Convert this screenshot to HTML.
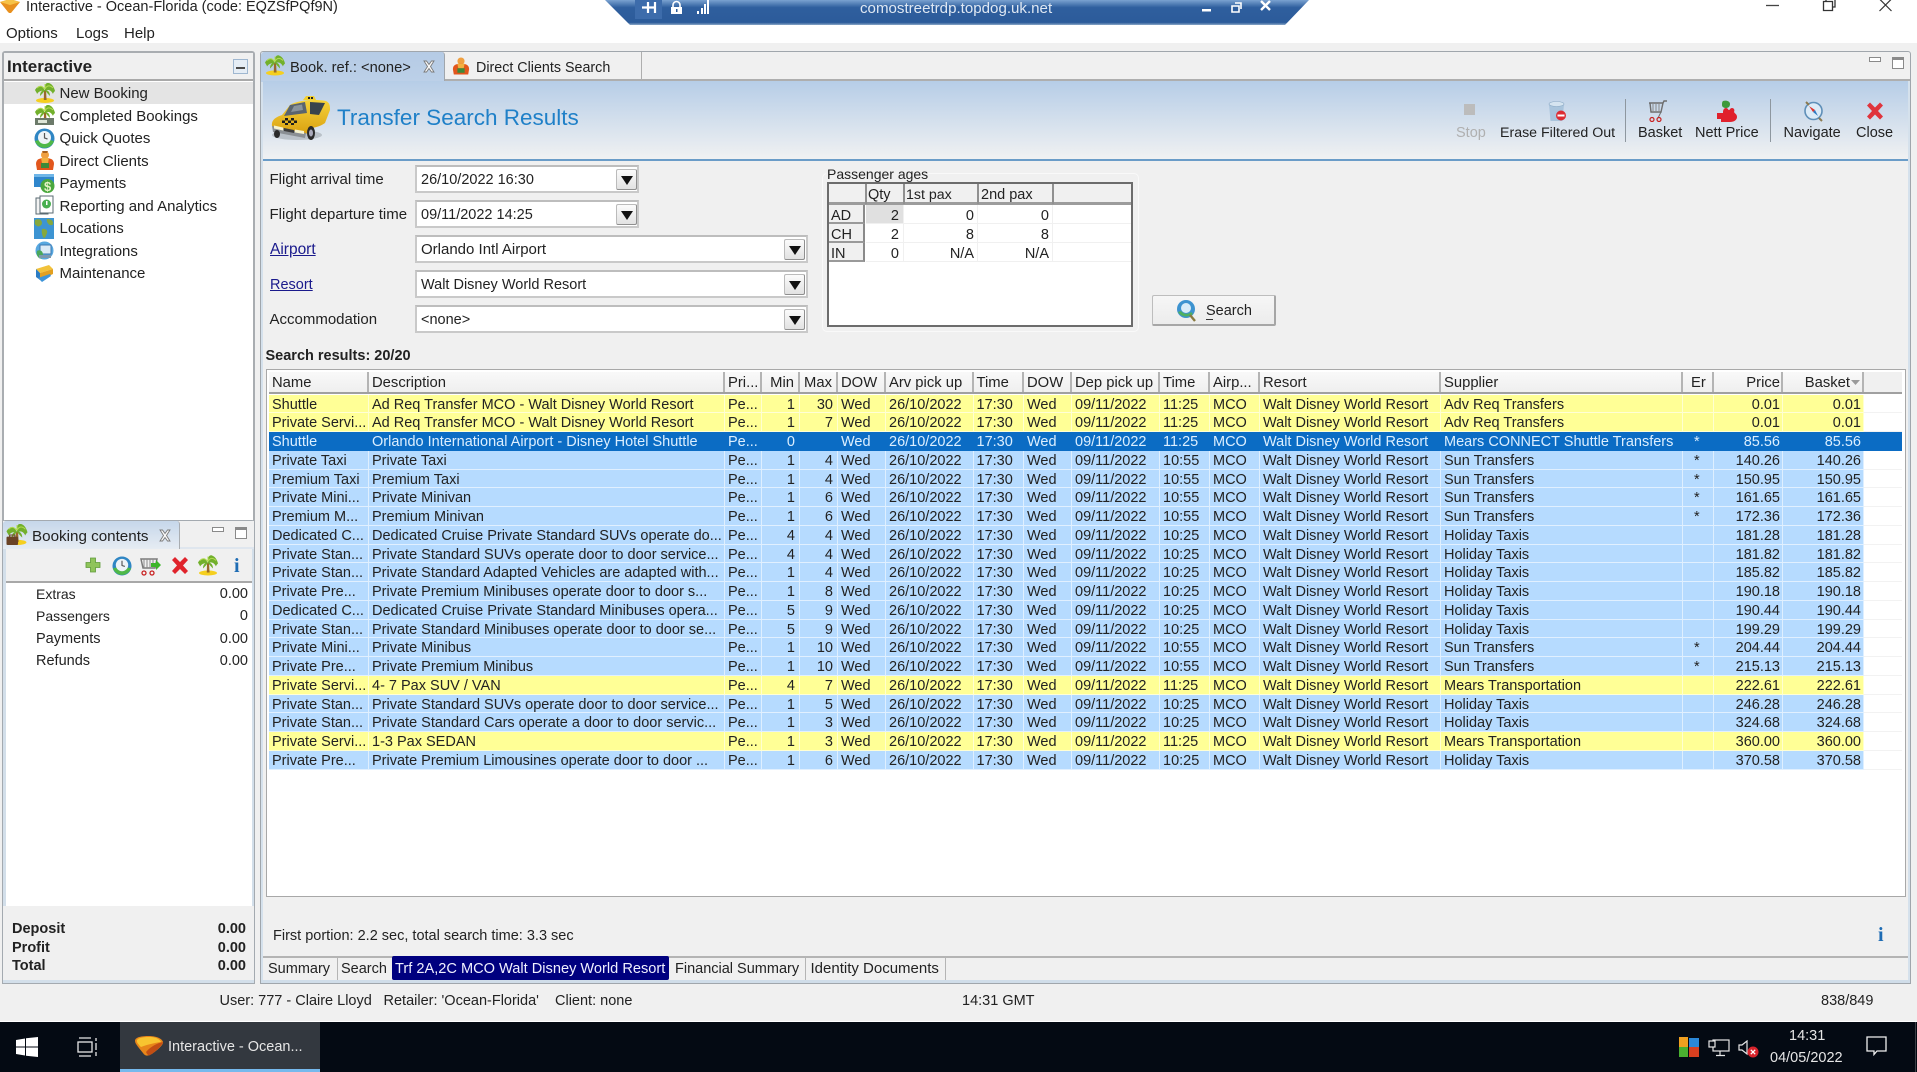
<!DOCTYPE html>
<html><head><meta charset="utf-8"><title>Interactive</title>
<style>
html,body{margin:0;padding:0;width:1917px;height:1072px;overflow:hidden;background:#fff}
#root{position:absolute;left:0;top:0;width:1917px;height:1072px;overflow:hidden;font:14.5px/18px "Liberation Sans",sans-serif;color:#222;filter:blur(.35px)}
.b,.t,svg{position:absolute}
.t{white-space:nowrap;margin-top:1px}
.h{font-weight:bold}
.f{font-size:15px}
.l{color:#1a1a8c;text-decoration:underline}
.rw{position:absolute;left:269px;width:1633px;height:18.75px;display:grid;grid-template-columns:100px 356px 37px 38px 38px 48px 87.5px 50.5px 48px 88px 50px 50px 181px 242px 31px 69px 81px 38px}
.rw i{font-style:normal;display:block;white-space:nowrap;overflow:hidden;padding:0 3px;line-height:20px;height:18.75px;box-sizing:border-box;border-right:1px solid rgba(255,255,255,.55);border-bottom:1px solid rgba(255,255,255,.6)}
.rw i:nth-child(n+4):nth-child(-n+5){text-align:right;padding-right:4px}
.rw i:nth-child(n+16):nth-child(-n+17){text-align:right;padding-right:2px}
.rw i:nth-child(4){padding-right:13px}
.rw i:nth-child(15){padding-left:11px}
.rw i:nth-child(18){border-right:0;border-bottom:1px solid #f2f2f2;background:#fff!important}
.y i{background:#ffff96}.a i{background:#b6dbff}
.s i{background:#0b6cc4;color:#dcefff;border-color:rgba(11,108,196,1)}
.s i:nth-child(18){background:#0b6cc4!important;border-color:#0b6cc4}
.hd{position:absolute;left:269px;top:372px;width:1633px;height:22px;display:grid;grid-template-columns:100px 356px 37px 38px 38px 48px 87.5px 50.5px 48px 88px 50px 50px 181px 242px 31px 69px 81px 38px;background:#f0f0f0;border-bottom:2px solid #a0a0a0;box-sizing:border-box;font-size:14.8px}
.hd i{font-style:normal;white-space:nowrap;overflow:hidden;padding:0 3px;line-height:22px;box-sizing:border-box;border-right:2px solid #b4b4b4;background:linear-gradient(#f9f9f9,#efefef)}
.hd i:nth-child(n+4):nth-child(-n+5){text-align:right;padding-right:4px}
.hd i:nth-child(16){text-align:right;padding-right:1px}
.hd i:nth-child(17){text-align:right}
.hd i:nth-child(15){padding-left:8px}
.hd i:nth-child(18){border-right:0;background:#f0f0f0}
.dd{position:absolute;width:21px;height:21px;box-sizing:border-box;background:linear-gradient(#fbfbfb,#e2e2e2);border:1px solid #bbb;border-bottom-color:#8f8f8f;border-right-color:#8f8f8f;border-radius:2px}
.dd:after{content:"";position:absolute;left:4px;top:6px;border-left:6px solid transparent;border-right:6px solid transparent;border-top:9px solid #111}
.in{position:absolute;box-sizing:border-box;background:#fff;border:2px solid #c9c9c9;border-top-color:#bdbdbd}
.rh{position:absolute;left:829px;width:36px;height:19px;background:#f0f0f0;border-right:2px solid #8a8a8a;border-bottom:2px solid #9a9a9a;box-sizing:border-box}
.ln{position:absolute;background:#a8a8a8}
</style></head><body><div id="root">

<svg width="0" height="0" style="position:absolute"><defs>
<symbol id="palm" viewBox="0 0 20 20">
<ellipse cx="10" cy="17.500" rx="9" ry="2.500" fill="#f5cf1f"/>
<path d="M9 7 L11 7 L11.600 17 L8.800 17 Z" fill="#9a6a2a"/>
<path d="M10 8 C7 1 3 2 0 7 C1 9 2 10 2 11 C4 8 7 7 10 8Z M10 8 C9 1 12 -1 14 0 C17 1 19 4 20 8 C19 9 18 10 18 11 C16 7 13 6 10 8Z M10 7 C7 7 5 9 5 13 C7 11 9 9 10 7Z M10 7 C13 7 15 9 15 13 C13 11 11 9 10 7Z" fill="#72b02c"/>
<path d="M10 6 C7 3 5 2 2 5 M10 6 C12 2 15 2 18 5 M10 6V1" stroke="#b4dc52" stroke-width="1" fill="none"/>
</symbol>
</defs></svg>

<!-- top bar -->
<div class="b" style="left:0;top:43px;width:1917px;height:978px;background:#f0f0f0"></div>
<svg style="left:0;top:0" width="21" height="13" viewBox="0 0 21 13"><path d="M0 2 L10 -1 L20 2 L11 13 Q10 14 8 12 Z" fill="#e8901e"/><path d="M0 2 L10 -1 L20 2 L10 5Z" fill="#f6c247"/></svg>
<div class="t" style="left:26px;top:-3px">Interactive - Ocean-Florida (code: EQZSfPQf9N)</div>
<div class="t f" style="left:6px;top:24px">Options</div><div class="t f" style="left:76px;top:24px">Logs</div><div class="t f" style="left:124px;top:24px">Help</div>

<svg style="left:604px;top:0" width="706" height="26" viewBox="0 0 706 26"><defs><linearGradient id="rg" x1="0" y1="0" x2="0" y2="1"><stop offset="0" stop-color="#7aa2d0"/><stop offset=".3" stop-color="#2f5f9e"/><stop offset=".9" stop-color="#2c5b9a"/><stop offset="1" stop-color="#8aa8c8"/></linearGradient></defs><polygon points="1,0 26,25 681,25 705,0" fill="url(#rg)"/><rect x="31" y="0" width="27" height="19" fill="#3d6cab"/>
<path d="M38 7.500h13M44 2v11M51 2v11" stroke="#fff" stroke-width="2.200" fill="none"/>
<path d="M69 8V5a3.500 3.500 0 0 1 7 0v3" stroke="#fff" stroke-width="1.600" fill="none"/><rect x="67" y="7" width="11" height="7" fill="#fff"/><rect x="72" y="9" width="1.500" height="3" fill="#2c5b9a"/>
<path d="M93 14h2v-3h-2zM97 14h2V8h-2zM100 14h2V4h-2zM103 14h2V0h-2z" fill="#fff"/>
<rect x="598" y="9" width="9" height="2.500" fill="#fff"/><path d="M628 6h7v6h-7zM631 3h6v6" stroke="#fff" stroke-width="1.600" fill="none"/><path d="M657 1l9 9M666 1l-9 9" stroke="#fff" stroke-width="2.400"/></svg>
<div class="t" style="left:860px;top:-1px;color:#dfe8f3;font-size:15.100px">comostreetrdp.topdog.uk.net</div>

<svg style="left:1760px;top:0" width="140" height="14" viewBox="0 0 140 14"><path d="M6 5.500h13" stroke="#444" stroke-width="1.300"/><path d="M63.500 1.500h9v9h-9z" stroke="#333" stroke-width="1.300" fill="none"/><path d="M66 1V-1h9v8h-2" stroke="#333" stroke-width="1.300" fill="none"/><path d="M119.500 -1l12 12M131.500 -1l-12 12" stroke="#333" stroke-width="1.200"/></svg>

<!-- left top panel -->
<div class="b" style="left:2px;top:51px;width:253px;height:499px;box-sizing:border-box;background:#fff;border:2px solid #a9adb1;border-radius:3px 3px 0 0"></div>
<div class="b" style="left:4px;top:53px;width:249px;height:26px;background:#f0f0f0;border-bottom:2px solid #a9a9a9"></div>
<div class="t h" style="left:7px;top:57px;font-size:17px">Interactive</div>
<div class="b" style="left:233px;top:59px;width:15px;height:15px;box-sizing:border-box;background:#e5edf5;border:1px solid #9fb7d0"></div><div class="b" style="left:236px;top:67px;width:9px;height:2px;background:#4a4a4a"></div>
<div class="b" style="left:4px;top:82px;width:249px;height:22px;background:#e4e4e4"></div>

<svg style="left:35px;top:83px" width="20" height="20"><use href="#palm"/></svg>
<svg style="left:35px;top:105px" width="20" height="20"><use href="#palm"/><rect x="0" y="13" width="19" height="7" fill="#6c7a6a"/><rect x="3" y="15" width="9" height="3" fill="#dfe6d8"/></svg>
<svg style="left:34px;top:128px" width="21" height="21" viewBox="0 0 21 21"><circle cx="10.500" cy="10.500" r="10" fill="#2f86c4"/><path d="M1 13a10 10 0 0 0 19 0l-4-1a6 6 0 0 1-11 0z" fill="#4fb848"/><circle cx="10.500" cy="9.500" r="6.500" fill="#eef3f7"/><path d="M10.500 5v5l3 1" stroke="#555" stroke-width="1.200" fill="none"/></svg>
<svg style="left:35px;top:150px" width="20" height="21" viewBox="0 0 20 21"><circle cx="10" cy="5" r="4" fill="#f0a040"/><path d="M7 1h6l-1 2H8z" fill="#a8601c"/><path d="M1 14c0-5 4-6 9-6s9 1 9 6l-1 6H2z" fill="#e2561c"/><path d="M6 8h8l-1 5H7z" fill="#f2b040"/><rect x="6" y="13" width="8" height="5" fill="#3d8a3a"/></svg>
<svg style="left:34px;top:173px" width="21" height="21" viewBox="0 0 21 21"><rect x="0" y="1" width="20" height="13" fill="#2f86cc"/><rect x="0" y="1" width="20" height="3" fill="#6fb6e8"/><circle cx="13.500" cy="13" r="7" fill="#4aa83e"/><text x="10" y="18" font-family="Liberation Sans,sans-serif" font-weight="bold" font-size="13" fill="#e6f2c8">$</text></svg>
<svg style="left:35px;top:195px" width="19" height="21" viewBox="0 0 19 21"><rect x="1" y="3" width="12" height="16" fill="#f3f3f3" stroke="#5a6a72"/><rect x="5" y="1" width="13" height="17" fill="#fff" stroke="#5a6a72"/><circle cx="11.500" cy="9" r="4.500" fill="#48b050"/><rect x="11" y="6" width="1.500" height="4" fill="#fff"/></svg>
<svg style="left:34px;top:218px" width="20" height="21" viewBox="0 0 20 21"><rect width="20" height="21" fill="#3d94d2"/><path d="M1 2c4-2 7 0 7 3s-4 4-5 3-3-1-2-6zM13 1c3 0 6 1 6 4s-2 2-3 2-4-3-3-6zM8 11c3-1 6 1 5 4s-2 5-3 5-3-6-2-9z" fill="#86a83c"/></svg>
<svg style="left:35px;top:240px" width="19" height="21" viewBox="0 0 19 21"><circle cx="9.500" cy="10.500" r="9" fill="#58a8e0"/><rect x="5" y="5" width="11" height="9" fill="#dbeaf6" stroke="#3d78b0"/><path d="M2 11c3-2 6 0 6 4s-3 4-4 3-3-3-2-7z" fill="#4aa85a"/><rect x="4" y="15" width="12" height="3" fill="#7d98ae"/></svg>
<svg style="left:35px;top:263px" width="19" height="20" viewBox="0 0 19 20"><path d="M1 6l13-4 4 4-13 4z" fill="#f2c23a"/><path d="M1 6l4 4v7l-4-3z" fill="#2b7cc4"/><path d="M5 10l13-4v5L5 17z" fill="#e2a020"/><path d="M3 15l4 4 9-6-1-2z" fill="#3d94d8"/></svg>

<div class="t f" style="left:59.500px;top:84px">New Booking</div>
<div class="t f" style="left:59.500px;top:106.500px">Completed Bookings</div>
<div class="t f" style="left:59.500px;top:129px">Quick Quotes</div>
<div class="t f" style="left:59.500px;top:151.500px">Direct Clients</div>
<div class="t f" style="left:59.500px;top:174px">Payments</div>
<div class="t f" style="left:59.500px;top:196.500px">Reporting and Analytics</div>
<div class="t f" style="left:59.500px;top:219px">Locations</div>
<div class="t f" style="left:59.500px;top:241.500px">Integrations</div>
<div class="t f" style="left:59.500px;top:264px">Maintenance</div>

<!-- left bottom panel -->
<div class="b" style="left:2px;top:520px;width:253px;height:464px;box-sizing:border-box;background:#d3dfea;border:1px solid #a4aab0;border-radius:3px 3px 0 0"></div>
<div class="b" style="left:3px;top:521px;width:251px;height:27px;background:#f0f0f0"></div>
<div class="b" style="left:3px;top:521px;width:177px;height:28px;box-sizing:border-box;background:linear-gradient(#c6d7ea,#e6ecf3);border-right:1px solid #a9adb1;border-radius:3px 3px 0 0"></div>
<div class="b" style="left:180px;top:547px;width:74px;height:2px;background:#dfe6ee"></div>
<svg style="left:6px;top:524px" width="22" height="21" viewBox="0 0 20 20"><use href="#palm"/><rect x="0" y="12" width="11" height="8" rx="1" fill="#6a4326"/><rect x="3" y="10.500" width="5" height="2" fill="none" stroke="#6a4326"/></svg>
<div class="t" style="left:32px;top:527px;font-size:15.200px">Booking contents</div>
<svg style="left:159px;top:529px" width="12" height="13" viewBox="0 0 12 13"><path d="M1 1h2.500L6 4.500 8.500 1H11L7.500 6.500 11 12H8.500L6 8.500 3.500 12H1L4.500 6.500z" fill="#f8f8f8" stroke="#7a7a7a" stroke-width=".9"/></svg>
<div class="b" style="left:212px;top:527px;width:12px;height:5px;box-sizing:border-box;background:#fff;border:1px solid #8a8a8a"></div>
<div class="b" style="left:235px;top:527px;width:12px;height:12px;box-sizing:border-box;background:#fff;border:1px solid #8a8a8a;border-top-width:3px"></div>
<div class="b" style="left:6px;top:549px;width:246px;height:32px;background:#f0f0f0;border-bottom:2px solid #a8a8a8"></div>
<svg style="left:85px;top:557px" width="16" height="16" viewBox="0 0 16 16"><path d="M5.500 1h5v4.500H15v5h-4.500V15h-5v-4.500H1v-5h4.500z" fill="#8fc45a" stroke="#5d9a38" stroke-width=".8"/></svg>
<svg style="left:112px;top:556px" width="20" height="20" viewBox="0 0 21 21"><circle cx="10.500" cy="10.500" r="10" fill="#2f86c4"/><path d="M1 13a10 10 0 0 0 19 0l-4-1a6 6 0 0 1-11 0z" fill="#4fb848"/><circle cx="10.500" cy="9.500" r="6.500" fill="#eef3f7"/><path d="M10.500 5v5l3 1" stroke="#555" stroke-width="1.200" fill="none"/></svg>
<svg style="left:140px;top:555px" width="21" height="21" viewBox="0 0 21 21"><path d="M1 4h16l-2 9H3z" fill="none" stroke="#7a7a7a" stroke-width="1.500"/><path d="M4 4v9M7 4v9M10 4v9M13 4v9" stroke="#8a8a8a"/><circle cx="4" cy="18" r="2" fill="none" stroke="#c82020" stroke-width="1.300"/><circle cx="12" cy="18" r="2" fill="none" stroke="#c82020" stroke-width="1.300"/><path d="M11 8h5V5l5 5-5 5v-3h-5z" fill="#3cb528"/></svg>
<svg style="left:171px;top:557px" width="18" height="17" viewBox="0 0 18 17"><path d="M1 3l3-3 5 5 5-5 3 3-5 5.500 5 5.500-3 3-5-5-5 5-3-3 5-5.500z" fill="#e0242c"/></svg>
<svg style="left:198px;top:555px" width="20" height="21"><use href="#palm"/></svg>
<div class="t" style="left:234px;top:554px;font:bold 20px/22px 'Liberation Serif',serif;color:#1e6cb4">i</div>
<div class="b" style="left:6px;top:583px;width:246px;height:323px;background:#fff"></div>
<div class="b" style="left:3px;top:906px;width:251px;height:74px;background:#f0f0f0"></div>
<div class="t" style="left:36px;top:583.500px;font-size:14px">Extras</div><div class="t" style="right:1669px;top:584px">0.00</div>
<div class="t" style="left:36px;top:605.500px;font-size:14px">Passengers</div><div class="t" style="right:1669px;top:606px">0</div>
<div class="t" style="left:36px;top:628.500px">Payments</div><div class="t" style="right:1669px;top:628.500px">0.00</div>
<div class="t" style="left:36px;top:650.500px">Refunds</div><div class="t" style="right:1669px;top:650.500px">0.00</div>
<div class="t h" style="left:12px;top:919px">Deposit</div><div class="t h" style="right:1671px;top:919px">0.00</div>
<div class="t h" style="left:12px;top:938px">Profit</div><div class="t h" style="right:1671px;top:938px">0.00</div>
<div class="t h" style="left:12px;top:956px">Total</div><div class="t h" style="right:1671px;top:956px">0.00</div>

<!-- right panel -->
<div class="b" style="left:260px;top:51px;width:1651px;height:933px;box-sizing:border-box;background:#f0f0f0;border:1px solid #a0a6ac;border-radius:3px 3px 0 0"></div>
<div class="b" style="left:261px;top:80px;width:2px;height:903px;background:#d5e1ec"></div>
<div class="b" style="left:1908px;top:80px;width:2px;height:903px;background:#d5e1ec"></div>
<div class="b" style="left:261px;top:980px;width:1649px;height:3px;background:#d0dde9"></div>
<div class="b" style="left:445px;top:79px;width:1465px;height:2px;background:#aeaeae"></div>
<div class="b" style="left:261px;top:52px;width:184px;height:30px;background:linear-gradient(#b5cbe5,#bcd0e8);border-right:1px solid #a0a6ac;box-sizing:border-box;border-radius:3px 3px 0 0"></div>
<div class="b" style="left:641px;top:52px;width:1px;height:28px;background:#aeaeae"></div>
<svg style="left:265px;top:55px" width="20" height="21"><use href="#palm"/></svg>
<div class="t" style="left:290px;top:58px;font-size:14.700px">Book. ref.: &lt;none&gt;</div>
<svg style="left:423px;top:60px" width="12" height="13" viewBox="0 0 12 13"><path d="M1 1h2.500L6 4.500 8.500 1H11L7.500 6.500 11 12H8.500L6 8.500 3.500 12H1L4.500 6.500z" fill="#f8f8f8" stroke="#7a7a7a" stroke-width=".9"/></svg>
<svg style="left:452px;top:56px" width="18" height="20" viewBox="0 0 20 21"><circle cx="10" cy="5" r="4" fill="#f0a040"/><path d="M1 14c0-5 4-6 9-6s9 1 9 6l-1 6H2z" fill="#e2561c"/><path d="M6 8h8l-1 5H7z" fill="#f2b040"/><rect x="6" y="13" width="8" height="5" fill="#3d8a3a"/></svg>
<div class="t" style="left:476px;top:58px;font-size:14.300px">Direct Clients Search</div>
<div class="b" style="left:1869px;top:57px;width:12px;height:5px;box-sizing:border-box;background:#fff;border:1px solid #8a8a8a"></div>
<div class="b" style="left:1892px;top:57px;width:12px;height:12px;box-sizing:border-box;background:#fff;border:1px solid #8a8a8a;border-top-width:3px"></div>

<!-- banner -->
<div class="b" style="left:263px;top:81px;width:1645px;height:78px;background:linear-gradient(#b6cde7,#f0f1f2)"></div>
<div class="b" style="left:263px;top:159px;width:1645px;height:2px;background:#6a9cc8"></div>
<svg style="left:270px;top:96px" width="62" height="48" viewBox="0 0 62 48">
<defs><linearGradient id="cy" x1="0" y1="0" x2="0" y2="1"><stop offset="0" stop-color="#f6d23a"/><stop offset="1" stop-color="#d9a010"/></linearGradient></defs>
<ellipse cx="27" cy="39" rx="25" ry="5" fill="#9aa3aa" opacity=".55"/>
<path d="M2 30 C1 24 6 21 12 19 L20 9 C28 4 45 3 56 5 C60 7 60 10 60 14 L55 27 C51 30 47 31 42 32 L36 38 C24 40 9 38 2 30Z" fill="url(#cy)"/>
<path d="M20 9 L35 6 L37 17 L14 20Z" fill="#5a646e"/><path d="M40 6 L55 7 L49 19 L40 18Z" fill="#39434c"/><path d="M24 10L32 8.500 33 14 21 16Z" fill="#8a949c"/>
<path d="M33 4 L46 4 L44 0 L36 0Z" fill="#f2cf30"/><path d="M38 1h2v2h-2zM41 1h2v2h-2z" fill="#222"/>
<path d="M15 22h3v2.500h-3zM21 22h3v2.500h-3zM18 24.500h3V27h-3zM24 24.500h3V27h-3zM12 24.500h3V27h-3zM15 27h3v2h-3zM21 27h3v2h-3z" fill="#1c1c1c"/>
<path d="M2 30 L36 37 L35 42 L3 36Z" fill="#8a8f94"/><path d="M4 29.500l9 2v3l-9-2zM25 33.500l9 1.500v3l-9-1.500z" fill="#f6f3d0"/>
<path d="M14 32l10 2v3l-10-2z" fill="#3c3c3c"/>
<ellipse cx="7" cy="38" rx="3" ry="4" fill="#2a2a2a"/><ellipse cx="41" cy="37" rx="4" ry="7" fill="#2a2a2a"/><ellipse cx="41" cy="37" rx="2" ry="3.500" fill="#aab"/></svg>
<div class="t" style="left:337px;top:104px;font-size:22.500px;line-height:26px;color:#1f80c8">Transfer Search Results</div>

<!-- toolbar -->
<div class="b" style="left:1464px;top:104px;width:11px;height:11px;background:#bcbcbc"></div>
<svg style="left:1547px;top:101px" width="21" height="21" viewBox="0 0 21 21"><path d="M2 3h15l-1.500 17h-12z" fill="#a9c4dc"/><ellipse cx="9.500" cy="3" rx="7.500" ry="2.500" fill="#d5e4f0" stroke="#8aa8c4" stroke-width=".6"/><circle cx="14" cy="14.500" r="5" fill="#dd2c33"/><rect x="10.500" y="13.500" width="7" height="2" fill="#fff"/></svg>
<svg style="left:1648px;top:100px" width="20" height="22" viewBox="0 0 20 22"><path d="M1 3h14l1-2h3M2 3l1 9h10l2-9" fill="none" stroke="#6d6d6d" stroke-width="1.400"/><path d="M5 3v9M8 3v9M11 3v9" stroke="#8a8a8a"/><path d="M13 12l-3 6" stroke="#6d6d6d"/><circle cx="4" cy="19.500" r="2" fill="none" stroke="#c82020" stroke-width="1.200"/><circle cx="11" cy="19.500" r="2" fill="none" stroke="#c82020" stroke-width="1.200"/></svg>
<svg style="left:1717px;top:100px" width="20" height="22" viewBox="0 0 20 22"><path d="M6 1c3-1 7 0 7 3s-2 4-4 4-4-1-4-3 0-3 1-4z" fill="#3d9a3c"/><path d="M0 13h6v-1c0-2 1-4 3-4s2 2 3 2 1-2 3-2 3 2 2 4c1 2 3 2 3 5s-3 5-7 5H4v-3H0z" fill="#e0202c"/></svg>
<svg style="left:1803px;top:100px" width="21" height="22" viewBox="0 0 21 22"><circle cx="10.500" cy="11" r="8.500" fill="#dcebf7" stroke="#5f8fb8" stroke-width="1.600"/><path d="M6 6l6 4-2 2z" fill="#e0342c"/><path d="M15 16l-5-4 2-2z" fill="#2f7ac0"/><path d="M3 2l3 3M16 18l3 3" stroke="#8c7a50" stroke-width="2"/></svg>
<svg style="left:1866px;top:102px" width="18" height="18" viewBox="0 0 18 17"><path d="M1 3l3-3 5 5 5-5 3 3-5 5.500 5 5.500-3 3-5-5-5 5-3-3 5-5.500z" fill="#e0343c"/></svg>
<div class="t" style="left:1456px;top:123px;color:#b0b0b0">Stop</div>
<div class="t" style="left:1500px;top:123px;font-size:14.200px">Erase Filtered Out</div>
<div class="b" style="left:1625px;top:99px;width:1px;height:43px;background:#8e979f"></div>
<div class="t" style="left:1638px;top:123px">Basket</div>
<div class="t" style="left:1695px;top:123px">Nett Price</div>
<div class="b" style="left:1770px;top:99px;width:1px;height:43px;background:#8e979f"></div>
<div class="t" style="left:1783.500px;top:123px">Navigate</div>
<div class="t" style="left:1856px;top:123px">Close</div>

<!-- form -->
<div class="t f" style="left:269.500px;top:170px">Flight arrival time</div>
<div class="t f" style="left:269.500px;top:205px">Flight departure time</div>
<div class="t l" style="left:270px;top:240px;font-size:15.500px">Airport</div>
<div class="t l" style="left:270px;top:275px">Resort</div>
<div class="t f" style="left:269.500px;top:310px">Accommodation</div>
<div class="in" style="left:415px;top:165px;width:224px;height:28px"></div>
<div class="in" style="left:415px;top:200px;width:224px;height:28px"></div>
<div class="in" style="left:415px;top:235px;width:393px;height:28px"></div>
<div class="in" style="left:415px;top:270px;width:393px;height:28px"></div>
<div class="in" style="left:415px;top:305px;width:393px;height:28px"></div>
<div class="t" style="left:421px;top:170px">26/10/2022 16:30</div>
<div class="t" style="left:421px;top:205px">09/11/2022 14:25</div>
<div class="t" style="left:421px;top:240px;font-size:15px">Orlando Intl Airport</div>
<div class="t" style="left:421px;top:275px">Walt Disney World Resort</div>
<div class="t" style="left:421px;top:310px">&lt;none&gt;</div>
<div class="dd" style="left:616px;top:168.500px"></div>
<div class="dd" style="left:616px;top:203.500px"></div>
<div class="dd" style="left:784px;top:238.500px"></div>
<div class="dd" style="left:784px;top:273.500px"></div>
<div class="dd" style="left:784px;top:308.500px"></div>

<!-- passenger ages -->
<div class="b" style="left:822px;top:173px;width:317px;height:159px;box-sizing:border-box;border:1px solid #f9f9f9;border-radius:5px"></div>
<div class="b" style="left:826px;top:170px;width:102px;height:10px;background:#f0f0f0"></div>
<div class="t" style="left:827px;top:164px;font-size:14px">Passenger ages</div>
<div class="b" style="left:827px;top:182px;width:306px;height:145px;box-sizing:border-box;background:#fff;border:2px solid #6c6c6c"></div>
<div class="b" style="left:829px;top:184px;width:302px;height:21px;box-sizing:border-box;background:#f0f0f0;border-bottom:3px solid #9c9c9c"></div>
<div class="ln" style="left:865px;top:184px;width:2px;height:20px;background:#909090"></div>
<div class="ln" style="left:903px;top:184px;width:2px;height:20px;background:#909090"></div>
<div class="ln" style="left:977px;top:184px;width:2px;height:20px;background:#909090"></div>
<div class="ln" style="left:1052px;top:184px;width:2px;height:20px;background:#909090"></div>
<div class="rh" style="top:205px"></div><div class="rh" style="top:224px"></div><div class="rh" style="top:243px;height:19px"></div>
<div class="b" style="left:866px;top:205px;width:37px;height:18px;background:#e0e0e0"></div>
<div class="ln" style="left:866px;top:223px;width:265px;height:1px;background:#f0f0f0"></div>
<div class="ln" style="left:866px;top:242px;width:265px;height:1px;background:#f0f0f0"></div>
<div class="ln" style="left:866px;top:261px;width:265px;height:1px;background:#f0f0f0"></div>
<div class="ln" style="left:903px;top:205px;width:1px;height:57px;background:#f0f0f0"></div>
<div class="ln" style="left:977px;top:205px;width:1px;height:57px;background:#f0f0f0"></div>
<div class="ln" style="left:1052px;top:205px;width:1px;height:57px;background:#f0f0f0"></div>
<div class="t" style="left:868px;top:185px">Qty</div><div class="t" style="left:906px;top:185px;font-size:14.200px">1st pax</div><div class="t" style="left:981px;top:185px">2nd pax</div>
<div class="t" style="left:831px;top:206px">AD</div><div class="t" style="left:831px;top:225px">CH</div><div class="t" style="left:831px;top:244px">IN</div>
<div class="t" style="right:1018px;top:206px">2</div><div class="t" style="right:943px;top:206px">0</div><div class="t" style="right:868px;top:206px">0</div>
<div class="t" style="right:1018px;top:225px">2</div><div class="t" style="right:943px;top:225px">8</div><div class="t" style="right:868px;top:225px">8</div>
<div class="t" style="right:1018px;top:244px">0</div><div class="t" style="right:943px;top:244px">N/A</div><div class="t" style="right:868px;top:244px">N/A</div>

<!-- search button -->
<div class="b" style="left:1152px;top:295px;width:124px;height:31px;box-sizing:border-box;background:linear-gradient(#f6f6f6,#ececec);border:1px solid #bdbdbd;border-bottom:2px solid #a6a6a6;border-right:2px solid #a6a6a6;border-radius:2px"></div>
<svg style="left:1176px;top:299px" width="21" height="23" viewBox="0 0 21 23"><circle cx="10" cy="10" r="9" fill="#3d93d0"/><circle cx="10" cy="9" r="5" fill="#d8ecf8"/><path d="M2 13c3 5 10 6 15 2l-2-2c-3 3-8 2-10-1z" fill="#4fb060"/><path d="M14 16l5 6" stroke="#8a7a40" stroke-width="2.400"/></svg>
<div class="t" style="left:1206px;top:301px">Search</div>
<div class="b" style="left:1206px;top:319px;width:7px;height:1px;background:#333"></div>

<!-- results -->
<div class="t h" style="left:265.500px;top:346px">Search results: 20/20</div>
<div class="b" style="left:266px;top:369px;width:1640px;height:528px;box-sizing:border-box;background:#fff;border:1px solid #a8a8a8"></div>
<div class="hd"><i>Name</i><i>Description</i><i>Pri...</i><i>Min</i><i>Max</i><i>DOW</i><i>Arv pick up</i><i>Time</i><i>DOW</i><i>Dep pick up</i><i>Time</i><i>Airp...</i><i>Resort</i><i>Supplier</i><i>Er</i><i>Price</i><i style="padding-right:12px">Basket</i><i></i></div>
<svg style="left:1851px;top:380px" width="9" height="6"><path d="M0 0h9L4.500 5z" fill="#9a9a9a"/></svg>

<div class="rw y" style="top:394.600px"><i>Shuttle</i><i>Ad Req Transfer MCO - Walt Disney World Resort</i><i>Pe...</i><i>1</i><i>30</i><i>Wed</i><i>26/10/2022</i><i>17:30</i><i>Wed</i><i>09/11/2022</i><i>11:25</i><i>MCO</i><i>Walt Disney World Resort</i><i>Adv Req Transfers</i><i></i><i>0.01</i><i>0.01</i><i></i></div>
<div class="rw y" style="top:413.350px"><i>Private Servi...</i><i>Ad Req Transfer MCO - Walt Disney World Resort</i><i>Pe...</i><i>1</i><i>7</i><i>Wed</i><i>26/10/2022</i><i>17:30</i><i>Wed</i><i>09/11/2022</i><i>11:25</i><i>MCO</i><i>Walt Disney World Resort</i><i>Adv Req Transfers</i><i></i><i>0.01</i><i>0.01</i><i></i></div>
<div class="rw s" style="top:432.100px"><i>Shuttle</i><i>Orlando International Airport - Disney Hotel Shuttle</i><i>Pe...</i><i>0</i><i></i><i>Wed</i><i>26/10/2022</i><i>17:30</i><i>Wed</i><i>09/11/2022</i><i>11:25</i><i>MCO</i><i>Walt Disney World Resort</i><i>Mears CONNECT Shuttle Transfers</i><i>*</i><i>85.56</i><i>85.56</i><i></i></div>
<div class="rw a" style="top:450.850px"><i>Private Taxi</i><i>Private Taxi</i><i>Pe...</i><i>1</i><i>4</i><i>Wed</i><i>26/10/2022</i><i>17:30</i><i>Wed</i><i>09/11/2022</i><i>10:55</i><i>MCO</i><i>Walt Disney World Resort</i><i>Sun Transfers</i><i>*</i><i>140.26</i><i>140.26</i><i></i></div>
<div class="rw a" style="top:469.600px"><i>Premium Taxi</i><i>Premium Taxi</i><i>Pe...</i><i>1</i><i>4</i><i>Wed</i><i>26/10/2022</i><i>17:30</i><i>Wed</i><i>09/11/2022</i><i>10:55</i><i>MCO</i><i>Walt Disney World Resort</i><i>Sun Transfers</i><i>*</i><i>150.95</i><i>150.95</i><i></i></div>
<div class="rw a" style="top:488.350px"><i>Private Mini...</i><i>Private Minivan</i><i>Pe...</i><i>1</i><i>6</i><i>Wed</i><i>26/10/2022</i><i>17:30</i><i>Wed</i><i>09/11/2022</i><i>10:55</i><i>MCO</i><i>Walt Disney World Resort</i><i>Sun Transfers</i><i>*</i><i>161.65</i><i>161.65</i><i></i></div>
<div class="rw a" style="top:507.100px"><i>Premium M...</i><i>Premium Minivan</i><i>Pe...</i><i>1</i><i>6</i><i>Wed</i><i>26/10/2022</i><i>17:30</i><i>Wed</i><i>09/11/2022</i><i>10:55</i><i>MCO</i><i>Walt Disney World Resort</i><i>Sun Transfers</i><i>*</i><i>172.36</i><i>172.36</i><i></i></div>
<div class="rw a" style="top:525.850px"><i>Dedicated C...</i><i>Dedicated Cruise Private Standard SUVs operate do...</i><i>Pe...</i><i>4</i><i>4</i><i>Wed</i><i>26/10/2022</i><i>17:30</i><i>Wed</i><i>09/11/2022</i><i>10:25</i><i>MCO</i><i>Walt Disney World Resort</i><i>Holiday Taxis</i><i></i><i>181.28</i><i>181.28</i><i></i></div>
<div class="rw a" style="top:544.600px"><i>Private Stan...</i><i>Private Standard SUVs operate door to door service...</i><i>Pe...</i><i>4</i><i>4</i><i>Wed</i><i>26/10/2022</i><i>17:30</i><i>Wed</i><i>09/11/2022</i><i>10:25</i><i>MCO</i><i>Walt Disney World Resort</i><i>Holiday Taxis</i><i></i><i>181.82</i><i>181.82</i><i></i></div>
<div class="rw a" style="top:563.350px"><i>Private Stan...</i><i>Private Standard Adapted Vehicles are adapted with...</i><i>Pe...</i><i>1</i><i>4</i><i>Wed</i><i>26/10/2022</i><i>17:30</i><i>Wed</i><i>09/11/2022</i><i>10:25</i><i>MCO</i><i>Walt Disney World Resort</i><i>Holiday Taxis</i><i></i><i>185.82</i><i>185.82</i><i></i></div>
<div class="rw a" style="top:582.100px"><i>Private Pre...</i><i>Private Premium Minibuses operate door to door s...</i><i>Pe...</i><i>1</i><i>8</i><i>Wed</i><i>26/10/2022</i><i>17:30</i><i>Wed</i><i>09/11/2022</i><i>10:25</i><i>MCO</i><i>Walt Disney World Resort</i><i>Holiday Taxis</i><i></i><i>190.18</i><i>190.18</i><i></i></div>
<div class="rw a" style="top:600.850px"><i>Dedicated C...</i><i>Dedicated Cruise Private Standard Minibuses opera...</i><i>Pe...</i><i>5</i><i>9</i><i>Wed</i><i>26/10/2022</i><i>17:30</i><i>Wed</i><i>09/11/2022</i><i>10:25</i><i>MCO</i><i>Walt Disney World Resort</i><i>Holiday Taxis</i><i></i><i>190.44</i><i>190.44</i><i></i></div>
<div class="rw a" style="top:619.600px"><i>Private Stan...</i><i>Private Standard Minibuses operate door to door se...</i><i>Pe...</i><i>5</i><i>9</i><i>Wed</i><i>26/10/2022</i><i>17:30</i><i>Wed</i><i>09/11/2022</i><i>10:25</i><i>MCO</i><i>Walt Disney World Resort</i><i>Holiday Taxis</i><i></i><i>199.29</i><i>199.29</i><i></i></div>
<div class="rw a" style="top:638.350px"><i>Private Mini...</i><i>Private Minibus</i><i>Pe...</i><i>1</i><i>10</i><i>Wed</i><i>26/10/2022</i><i>17:30</i><i>Wed</i><i>09/11/2022</i><i>10:55</i><i>MCO</i><i>Walt Disney World Resort</i><i>Sun Transfers</i><i>*</i><i>204.44</i><i>204.44</i><i></i></div>
<div class="rw a" style="top:657.100px"><i>Private Pre...</i><i>Private Premium Minibus</i><i>Pe...</i><i>1</i><i>10</i><i>Wed</i><i>26/10/2022</i><i>17:30</i><i>Wed</i><i>09/11/2022</i><i>10:55</i><i>MCO</i><i>Walt Disney World Resort</i><i>Sun Transfers</i><i>*</i><i>215.13</i><i>215.13</i><i></i></div>
<div class="rw y" style="top:675.850px"><i>Private Servi...</i><i>4- 7 Pax SUV / VAN</i><i>Pe...</i><i>4</i><i>7</i><i>Wed</i><i>26/10/2022</i><i>17:30</i><i>Wed</i><i>09/11/2022</i><i>11:25</i><i>MCO</i><i>Walt Disney World Resort</i><i>Mears Transportation</i><i></i><i>222.61</i><i>222.61</i><i></i></div>
<div class="rw a" style="top:694.600px"><i>Private Stan...</i><i>Private Standard SUVs operate door to door service...</i><i>Pe...</i><i>1</i><i>5</i><i>Wed</i><i>26/10/2022</i><i>17:30</i><i>Wed</i><i>09/11/2022</i><i>10:25</i><i>MCO</i><i>Walt Disney World Resort</i><i>Holiday Taxis</i><i></i><i>246.28</i><i>246.28</i><i></i></div>
<div class="rw a" style="top:713.350px"><i>Private Stan...</i><i>Private Standard Cars operate a door to door servic...</i><i>Pe...</i><i>1</i><i>3</i><i>Wed</i><i>26/10/2022</i><i>17:30</i><i>Wed</i><i>09/11/2022</i><i>10:25</i><i>MCO</i><i>Walt Disney World Resort</i><i>Holiday Taxis</i><i></i><i>324.68</i><i>324.68</i><i></i></div>
<div class="rw y" style="top:732.100px"><i>Private Servi...</i><i>1-3 Pax SEDAN</i><i>Pe...</i><i>1</i><i>3</i><i>Wed</i><i>26/10/2022</i><i>17:30</i><i>Wed</i><i>09/11/2022</i><i>11:25</i><i>MCO</i><i>Walt Disney World Resort</i><i>Mears Transportation</i><i></i><i>360.00</i><i>360.00</i><i></i></div>
<div class="rw a" style="top:750.850px"><i>Private Pre...</i><i>Private Premium Limousines operate door to door ...</i><i>Pe...</i><i>1</i><i>6</i><i>Wed</i><i>26/10/2022</i><i>17:30</i><i>Wed</i><i>09/11/2022</i><i>10:25</i><i>MCO</i><i>Walt Disney World Resort</i><i>Holiday Taxis</i><i></i><i>370.58</i><i>370.58</i><i></i></div>

<div class="t" style="left:273px;top:926px">First portion: 2.2 sec, total search time: 3.3 sec</div>
<div class="t" style="left:1878px;top:923px;font:bold 20px/22px 'Liberation Serif',serif;color:#1e6cb4">i</div>

<!-- bottom tabs -->
<div class="b" style="left:263px;top:956px;width:1645px;height:2px;background:#b4b4b4"></div>
<div class="b" style="left:337px;top:958px;width:1px;height:22px;background:#b4b4b4"></div>
<div class="b" style="left:392px;top:956px;width:277px;height:24px;background:#00007f;border-radius:2px"></div>
<div class="b" style="left:805px;top:958px;width:1px;height:22px;background:#b4b4b4"></div>
<div class="b" style="left:945px;top:958px;width:1px;height:22px;background:#b4b4b4"></div>
<div class="t" style="left:268px;top:959px">Summary</div>
<div class="t" style="left:341px;top:959px">Search</div>
<div class="t" style="left:395px;top:959px;color:#f0f0ff;font-size:14.600px">Trf 2A,2C MCO Walt Disney World Resort</div>
<div class="t" style="left:675px;top:959px">Financial Summary</div>
<div class="t f" style="left:810.500px;top:959px">Identity Documents</div>

<!-- status -->
<div class="t" style="left:219.500px;top:990.500px">User: 777 - Claire Lloyd</div>
<div class="t" style="left:383.500px;top:990.500px">Retailer: 'Ocean-Florida'</div>
<div class="t" style="left:555px;top:990.500px">Client: none</div>
<div class="t" style="left:962px;top:990.500px">14:31 GMT</div>
<div class="t" style="left:1821px;top:990.500px">838/849</div>

<!-- taskbar -->
<div class="b" style="left:0;top:1022px;width:1917px;height:50px;background:#040a13"></div>
<svg style="left:16px;top:1037px" width="22" height="20" viewBox="0 0 22 20"><path d="M0 3l9-1.500V9.500H0zM10 1.300L22 0v9.500H10zM0 10.500h9V18.500L0 17zM10 10.500h12V20L10 18.700z" fill="#fff"/></svg>
<svg style="left:77px;top:1037px" width="21" height="20" viewBox="0 0 21 20" fill="none" stroke="#e8e8e8" stroke-width="1.300"><path d="M2 1h12M2 19h12"/><rect x="1" y="5" width="14" height="10"/><path d="M19 1v3M19 6v7M19 15v4"/></svg>
<div class="b" style="left:120px;top:1022px;width:200px;height:50px;background:#33383f"></div>
<div class="b" style="left:120px;top:1069px;width:200px;height:3px;background:#76b9ed"></div>
<svg style="left:134px;top:1035px" width="30" height="22" viewBox="0 0 30 22"><path d="M1 6C1 2 8 1 15 1c6 0 13 2 14 6 1 3-9 11-13 13-3 1-5 1-7-2C6 14 1 9 1 6Z" fill="#e8861a"/><path d="M3 5C5 2 12 2 17 2c4 0 9 2 10 5-7 1-15 3-20 5C5 10 2 7 3 5Z" fill="#f8c430"/><path d="M16 20C20 18 29 10 29 7c-5 1-12 4-17 10 1 2 2 4 4 3Z" fill="#c24e14"/></svg>
<div class="t" style="left:168px;top:1036.500px;color:#e6e6e6">Interactive - Ocean...</div>

<svg style="left:1679px;top:1037px" width="20" height="20" viewBox="0 0 20 20"><rect x="0" y="0" width="9" height="10" fill="#f0a020"/><rect x="10" y="1" width="10" height="9" fill="#2b88d8"/><rect x="0" y="10" width="9" height="10" fill="#4ab030"/><rect x="10" y="10" width="10" height="10" fill="#d84020"/></svg>
<svg style="left:1708px;top:1039px" width="22" height="18" viewBox="0 0 22 18" fill="none" stroke="#e6e6e6" stroke-width="1.200"><rect x="5" y="1" width="16" height="11"/><rect x="1" y="2" width="6" height="6" fill="#040a13"/><path d="M12 12v4M8 16.500h9"/></svg>
<svg style="left:1738px;top:1040px" width="21" height="18" viewBox="0 0 21 18"><path d="M1 5h3l5-4v13L4 10H1z" fill="none" stroke="#e6e6e6" stroke-width="1.200"/><circle cx="15" cy="12" r="5.500" fill="#d8242c"/><path d="M12.800 9.800l4.400 4.400M17.200 9.800l-4.400 4.400" stroke="#fff" stroke-width="1.300"/></svg>
<div class="t" style="left:1789px;top:1026px;color:#e6e6e6">14:31</div>
<div class="t" style="left:1770px;top:1048px;color:#e6e6e6">04/05/2022</div>
<svg style="left:1866px;top:1036px" width="22" height="20" viewBox="0 0 22 20"><path d="M1 1h19v14H11l-3 3.500V15H1z" fill="none" stroke="#f0f0f0" stroke-width="1.300"/></svg>
<div class="b" style="left:1915px;top:1022px;width:1px;height:50px;background:#3a3f46"></div>
</div></body></html>
